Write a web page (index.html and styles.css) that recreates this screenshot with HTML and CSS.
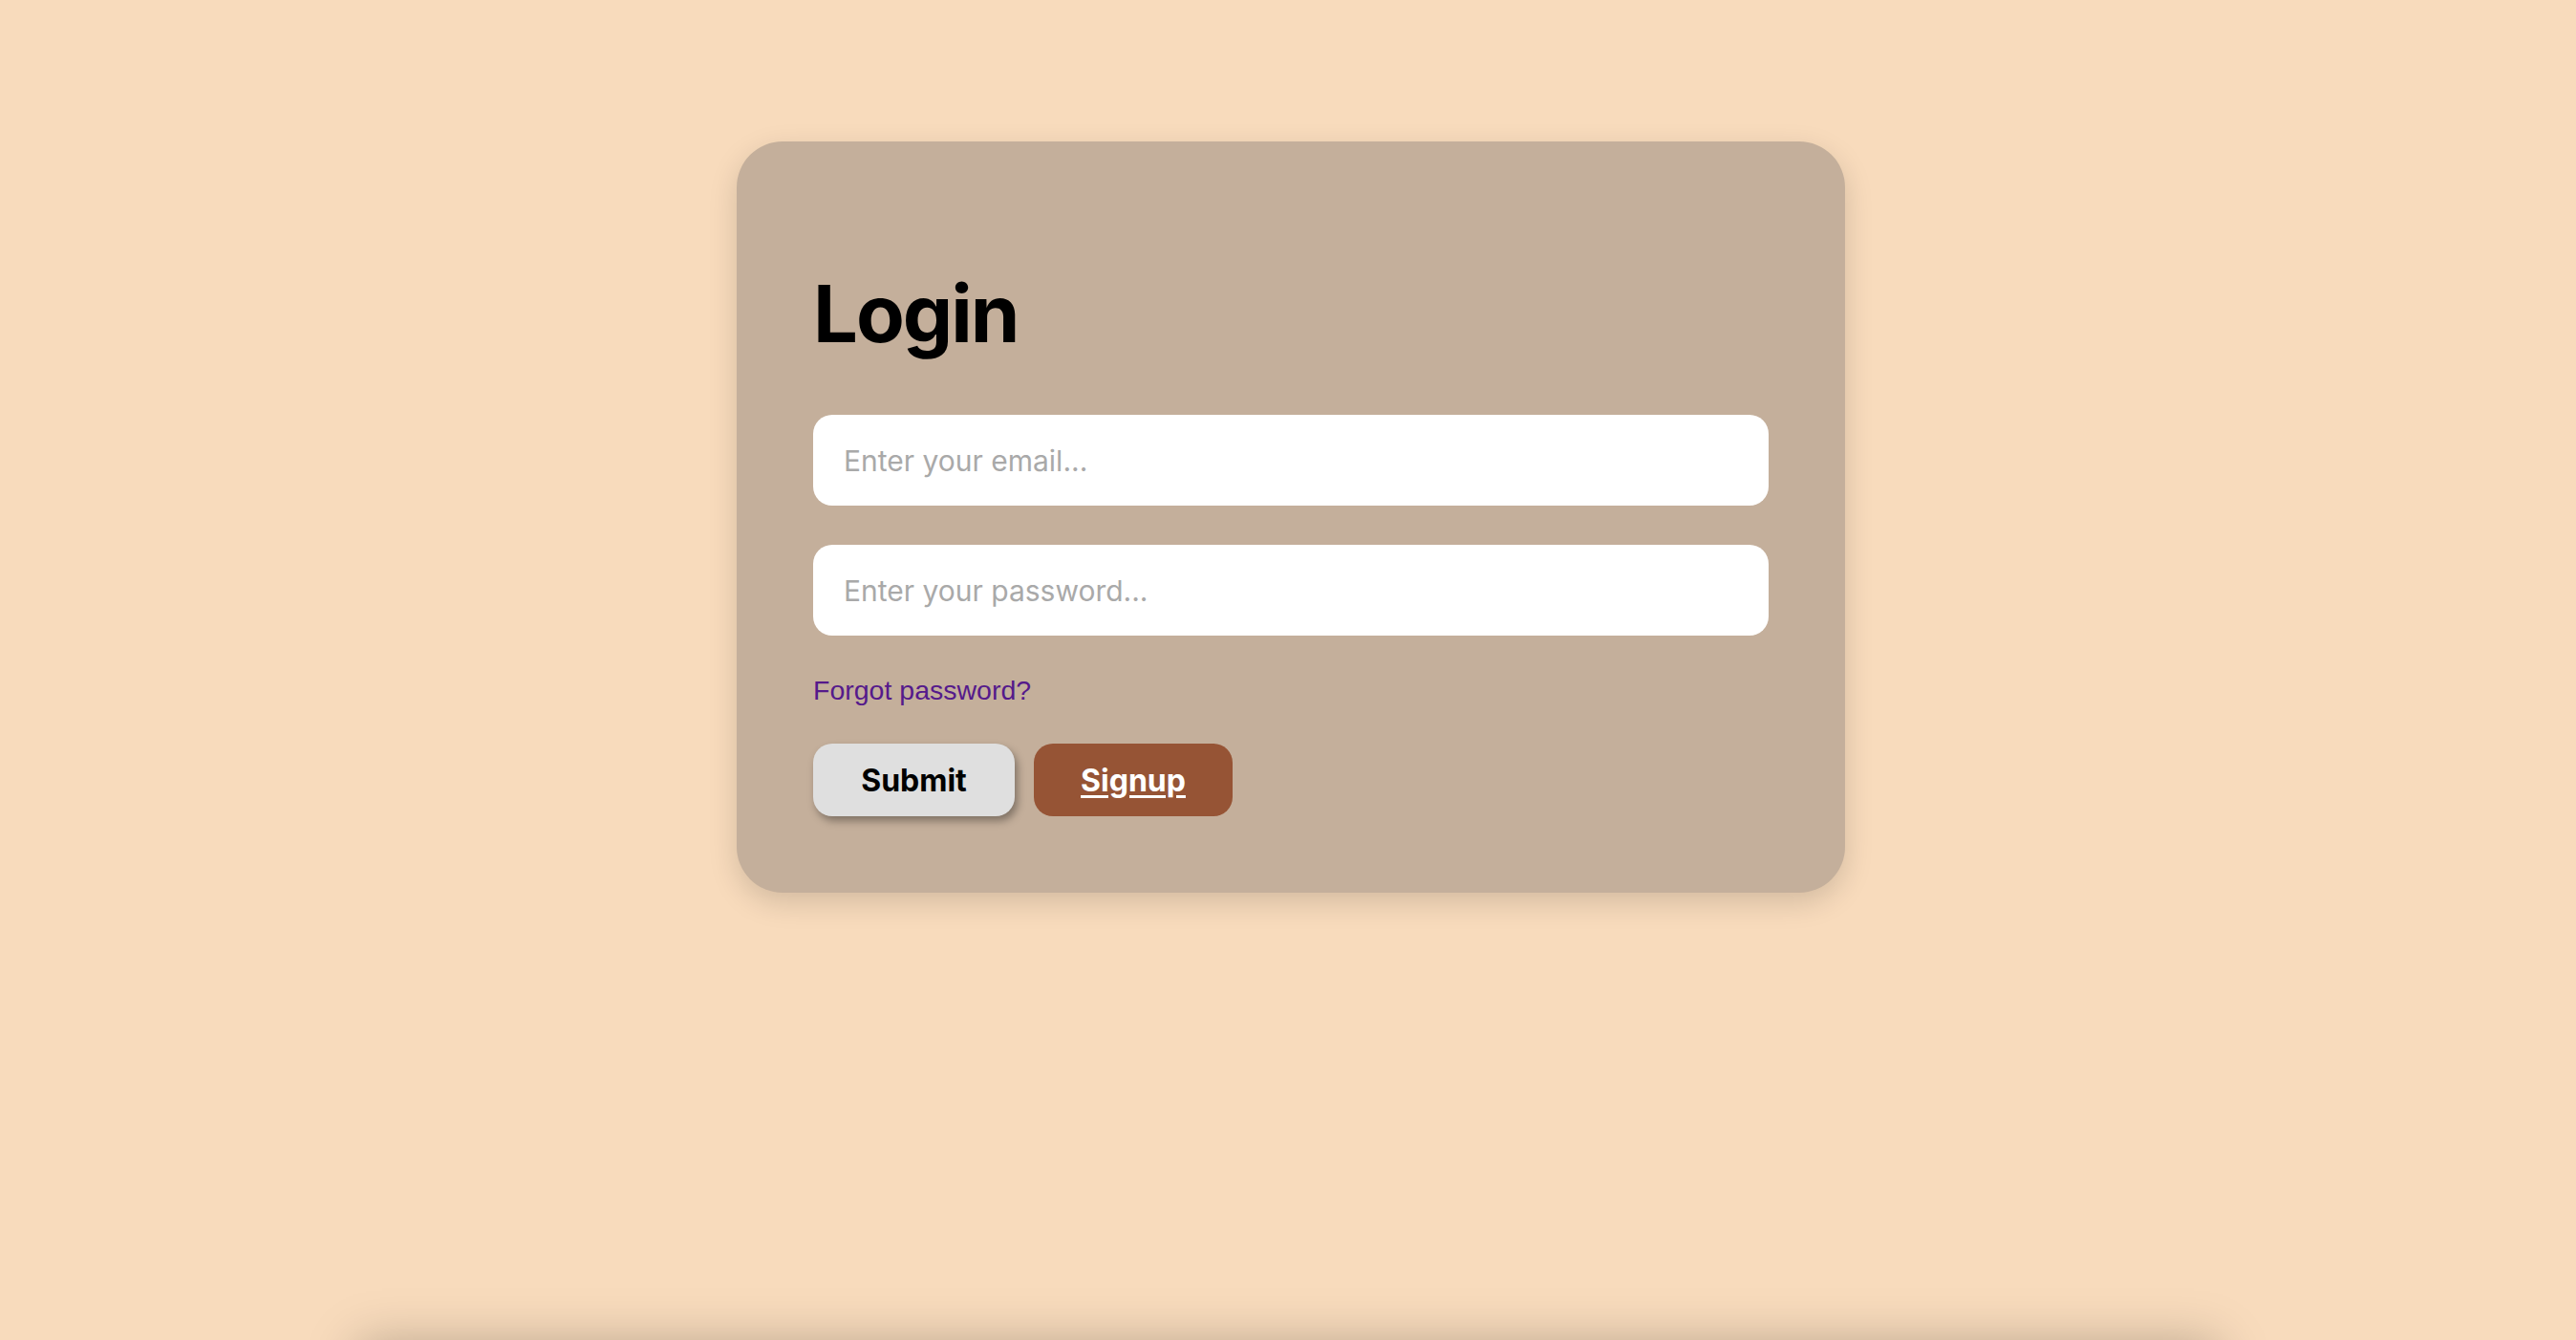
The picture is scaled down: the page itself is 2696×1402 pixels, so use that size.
FILE: index.html
```html
<!DOCTYPE html>
<html lang="en">
<head>
    <meta charset="UTF-8">
    <meta name="viewport" content="width=device-width, initial-scale=1.0">
    <title>Login</title>
    <link rel="stylesheet" href="styles.css">
</head>
<body>
    <main class="page">
        <section class="login-card">
            <h1>Login</h1>
            <form class="login-form" onsubmit="return false;">
                <input type="email" class="field" placeholder="Enter your email...">
                <input type="password" class="field" placeholder="Enter your password...">
                <a href="#" class="forgot-link">Forgot password?</a>
                <div class="actions">
                    <button type="submit" class="btn btn-submit">Submit</button>
                    <a href="#" class="btn btn-signup">Signup</a>
                </div>
            </form>
        </section>
    </main>

    <footer class="footer"></footer>
</body>
</html>
```

FILE: styles.css
```css
/* Global Styles */
* {
    margin: 0;
    padding: 0;
    box-sizing: border-box;
}

body {
    font-family: 'Inter', 'Liberation Sans', sans-serif;
    background-color: #f8dbbc;
    color: #000;
    overflow: hidden;
}

.page {
    padding: 148px 0 0 6px;
}

.login-card {
    width: 1160px;
    margin: 0 auto;
    padding: 80px;
    background-color: #c4af9b;
    border-radius: 48px;
    box-shadow: 0 10px 30px rgba(0, 0, 0, 0.15);
}

.login-card h1 {
    font-family: 'Inter', sans-serif;
    font-size: 83px;
    font-weight: 700;
    line-height: 100px;
    letter-spacing: -2px;
    margin: 50px 0 56px;
}

.login-form {
    display: flex;
    flex-direction: column;
}

.field {
    height: 95px;
    padding: 0 32px;
    margin-bottom: 41px;
    border: none;
    border-radius: 20px;
    background-color: #fff;
    font-family: 'Inter', sans-serif;
    font-size: 30px;
    color: #333;
    outline: none;
}

.field::placeholder {
    color: #a9a9a9;
}

.forgot-link {
    align-self: flex-start;
    font-family: 'Liberation Sans', Arial, sans-serif;
    font-size: 28.5px;
    line-height: 32px;
    color: #551a8b;
    text-decoration: none;
}

.actions {
    display: flex;
    gap: 20px;
    margin-top: 40px;
}

.btn {
    display: inline-flex;
    align-items: center;
    justify-content: center;
    height: 76px;
    border: none;
    border-radius: 20px;
    font-family: 'Inter', sans-serif;
    font-size: 32px;
    font-weight: 700;
    cursor: pointer;
}

.btn-submit {
    width: 211px;
    background-color: #dfdfdf;
    color: #000;
    box-shadow: 3px 5px 8px rgba(0, 0, 0, 0.35);
}

.btn-signup {
    width: 208px;
    background-color: #965435;
    color: #fff;
    text-decoration: underline;
    text-underline-offset: 4px;
}

.footer {
    width: 1946px;
    height: 200px;
    margin: 471px auto 0;
    background-color: #f8dbbc;
    box-shadow: 0 0 50px rgba(0, 0, 0, 0.25);
}
```
